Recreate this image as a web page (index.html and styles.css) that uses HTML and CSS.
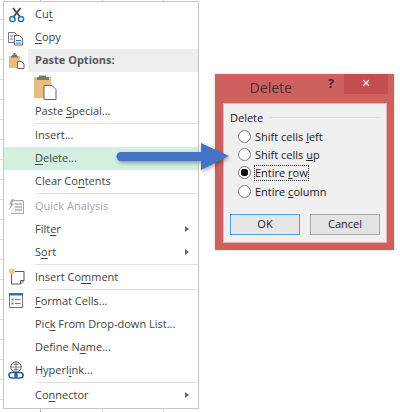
FILE: index.html
```html
<!DOCTYPE html>
<html lang="en">
<head>
<meta charset="utf-8">
<title>Delete</title>
<link rel="stylesheet" href="styles.css">
</head>
<body>
<div class="stage">
  <div class="menu">
    <div class="row"><svg class="icon" viewBox="0 0 20 20"><path d="M5 3l7.500 9.500M12.500 3L5 12.500" fill="none" stroke="#4a4a4a" stroke-width="1.900"/><circle cx="4.500" cy="14" r="2.600" fill="none" stroke="#2f75b5" stroke-width="1.500"/><circle cx="13" cy="14" r="2.600" fill="none" stroke="#2f75b5" stroke-width="1.500"/></svg><span class="label">Cu<u>t</u></span></div>
    <div class="row"><svg class="icon" viewBox="0 0 20 20"><path d="M.5 4.500h6l2 2v8h-8z" fill="#fff" stroke="#777"/><path d="M6.500 7.500h5l3 3v6.500h-8z" fill="#fff" stroke="#666"/><path d="M2 8h3M2 11h3M8 12.500h5M8 15h5" stroke="#2f75b5"/></svg><span class="label"><u>C</u>opy</span></div>
    <div class="row"><svg class="icon" viewBox="0 0 20 20"><path d="M1 5h11v12H1z" fill="#e9bd7c"/><path d="M4 5V3.500h1.500V2h2v1.500H9V5h1v1.500H3V5z" fill="#777"/><path d="M9.500 10.500h4l2.500 2.500v4.500H9.500z" fill="#fff" stroke="#666"/></svg><span class="label head">Paste Options:</span></div>
    <div class="row tall"><span class="spacer"></span><svg class="big" viewBox="0 0 24 26"><path d="M1 3h17v21H1z" fill="#e9bd7c"/><path d="M6 3V1.500h7V3h3v3H4V3z" fill="#777"/><path d="M11 11.500h8l4 4v10H11z" fill="#fff" stroke="#666"/></svg></div>
    <div class="row"><span class="spacer"></span><span class="label">Paste <u>S</u>pecial...</span></div>
    <div class="sep thin"></div>
    <div class="row"><span class="spacer"></span><span class="label">Insert...</span></div>
    <div class="row active"><span class="spacer"></span><span class="label"><u>D</u>elete...</span></div>
    <div class="row"><span class="spacer"></span><span class="label">Clear Co<u>n</u>tents</span></div>
    <div class="sep"></div>
    <div class="row off"><svg class="icon" viewBox="0 0 20 20"><path d="M5 3.500h10.500v13H3" fill="#f2f2f2" stroke="#aaa"/><path d="M4 2L1 7.500h2L1 13l5-6.500H4L6 2z" fill="#aaa"/><path d="M7 7h7M7 10h7M7 13h7" stroke="#999"/></svg><span class="label">Quick Analysis</span></div>
    <div class="row"><span class="spacer"></span><span class="label">Filt<u>e</u>r<i class="caret"></i></span></div>
    <div class="row"><span class="spacer"></span><span class="label">S<u>o</u>rt<i class="caret"></i></span></div>
    <div class="sep"></div>
    <div class="row"><svg class="icon" viewBox="0 0 20 20"><path d="M3.500 3.500h12.500v9l-3.500 3.500h-9z" fill="#fff" stroke="#555"/><path d="M12.500 16v-3.500H16" fill="none" stroke="#555"/><circle cx="4" cy="3.500" r="3" fill="#f2c77c"/></svg><span class="label">Insert Co<u>m</u>ment</span></div>
    <div class="sep thin"></div>
    <div class="row"><svg class="icon" viewBox="0 0 20 20"><path d="M1.500 1.500h13v14h-13z" fill="#fbfbfb" stroke="#777"/><path d="M1 1h14v2.500H1z" fill="#2f75b5"/><path d="M3.500 6.500h2v2h-2zM3.500 10.500h2v2h-2z" fill="#777"/><path d="M7 7.500h5.500M7 11.500h5.500" stroke="#777"/></svg><span class="label"><u>F</u>ormat Cells...</span></div>
    <div class="row"><span class="spacer"></span><span class="label">Pic<u>k</u> From Drop-down List...</span></div>
    <div class="row"><span class="spacer"></span><span class="label">Define N<u>a</u>me...</span></div>
    <div class="row"><svg class="icon" viewBox="0 0 20 20"><circle cx="8" cy="6" r="5.200" fill="none" stroke="#666"/><path d="M8 .800v10.400M2.800 6h10.400M4.500 2.500c2 1.500 5 1.500 7 0M4.500 9.500c2-1.500 5-1.500 7 0" fill="none" stroke="#666" stroke-width=".8"/><rect x="1" y="11.500" width="8" height="5.500" rx="2.700" fill="#fff" stroke="#2a5f9e" stroke-width="1.700"/><rect x="7" y="11.500" width="8" height="5.500" rx="2.700" fill="none" stroke="#2a5f9e" stroke-width="1.700"/></svg><span class="label">Hyperl<u>i</u>nk...</span></div>
    <div class="sep"></div>
    <div class="row"><span class="spacer"></span><span class="label">Co<u>n</u>nector<i class="caret"></i></span></div>
  </div>

  <div class="dialog">
    <div class="titlebar">
      <span class="title">Delete</span>
      <span class="help">?</span>
      <span class="close">✕</span>
    </div>
    <div class="body">
      <div class="group"><span>Delete</span><i class="rule"></i></div>
      <div class="options">
        <div class="option"><i class="radio"></i><span>Shift cells <u>l</u>eft</span></div>
        <div class="option"><i class="radio"></i><span>Shift cells <u>u</u>p</span></div>
        <div class="option"><i class="radio on"></i><span class="focus">Entire <u>r</u>ow</span></div>
        <div class="option"><i class="radio"></i><span>Entire <u>c</u>olumn</span></div>
      </div>
      <div class="buttons">
        <div class="btn primary">OK</div>
        <div class="btn">Cancel</div>
      </div>
    </div>
  </div>

  <svg class="arrow" viewBox="0 0 120 34"><path d="M6 10H86V1l28 13-28 14v-9H6a4.500 4.500 0 0 1 0-9z" fill="#4472c4"/></svg>
</div>
</body>
</html>
```
FILE: styles.css
```css
* { box-sizing: border-box; }
html, body { margin: 0; padding: 0; }
body {
  width: 400px;
  height: 412px;
  overflow: hidden;
  background: #fff;
  font-family: "Open Sans", "Noto Sans", sans-serif;
  color: #444;
}
.stage {
  position: relative;
  width: 400px;
  height: 412px;
  padding: 1px 0 0 3px;
  filter: blur(0.35px);
  background-image:
    linear-gradient(90deg, transparent 40px, #8fc4a0 40px, #8fc4a0 41px, transparent 41px, transparent 102px, #d6d6d6 102px, #d6d6d6 103px, transparent 103px, transparent 163px, #d6d6d6 163px, #d6d6d6 164px, transparent 164px),
    repeating-linear-gradient(180deg, transparent 0, transparent 19px, #dcdcdc 19px, #dcdcdc 20px);
  background-size: 198px 412px, 3px 412px;
  background-repeat: no-repeat;
}
.menu {
  display: flex;
  flex-direction: column;
  width: 196px;
  height: 408px;
  padding-top: 1px;
  background: #fff;
  border: 1px solid #c6c6c6;
}
.row {
  display: flex;
  align-items: center;
  flex: none;
  height: 23px;
  font-size: 11px;
}
.row.tall { height: 28px; align-items: flex-start; padding-top: 2px; }
.row.active { background: #d3f0e0; }
.row.off { color: #a8a8a8; }
.spacer { flex: none; width: 31px; }
.icon {
  flex: none;
  width: 20px;
  height: 20px;
  margin: 0 7px 0 4px;
}
.big { width: 24px; height: 26px; margin-left: -2px; }
.label {
  position: relative;
  flex: 1;
  white-space: nowrap;
  line-height: 22px;
  padding-bottom: 1px;
}
.label u { text-decoration-thickness: 1px; text-underline-offset: 2px; }
.label.head {
  margin-left: -7px;
  padding-left: 7px;
  background: #eeeeee;
  font-weight: 700;
  color: #595959;
}
.caret {
  position: absolute;
  right: 9px;
  top: 8px;
  border-left: 4px solid #666;
  border-top: 3.500px solid transparent;
  border-bottom: 3.500px solid transparent;
}
.sep {
  flex: none;
  height: 2px;
  margin-left: 31px;
  border-top: 1px solid #e2e2e2;
}
.sep.thin { height: 1px; }
.dialog {
  position: absolute;
  left: 215px;
  top: 74px;
  width: 179px;
  height: 176px;
  padding: 0 7px 7px 8px;
  display: flex;
  flex-direction: column;
  background: #cf6060;
  box-shadow: 0 0 2px rgba(0,0,0,.25);
}
.titlebar {
  flex: none;
  position: relative;
  height: 29px;
  padding-bottom: 2px;
  display: flex;
  align-items: center;
}
.title {
  width: 96px;
  text-align: center;
  font-size: 14px;
  color: #4f2c2c;
}
.help {
  position: absolute;
  left: 105px;
  top: 0;
  font-size: 13px;
  font-weight: 700;
  color: #3a2a2a;
}
.close {
  position: absolute;
  left: 121px;
  top: 0;
  width: 44px;
  height: 20px;
  background: #c44f4f;
  color: #fff;
  font-size: 11px;
  font-weight: 700;
  line-height: 20px;
  text-align: center;
  font-family: "DejaVu Sans", sans-serif;
}
.body {
  flex: 1;
  background: #f0f0f0;
  padding: 6px 6px 0;
  border: 1px solid #e6b4b4;
  font-size: 11px;
  color: #222;
  display: flex;
  flex-direction: column;
}
.group {
  display: flex;
  align-items: center;
  gap: 6px;
  height: 15px;
  font-size: 11px;
  color: #222;
}
.rule { flex: 1; height: 1px; background: #dcdcdc; }
.options {
  display: flex;
  flex-direction: column;
  margin-top: 2px;
  padding-left: 8px;
}
.option {
  display: flex;
  align-items: center;
  gap: 4px;
  height: 18.300px;
}
.radio {
  flex: none;
  width: 13px;
  height: 13px;
  border: 1px solid #7a7a7a;
  border-radius: 50%;
  background: #fff;
}
.radio.on { background: radial-gradient(circle, #111 3.500px, #fff 4px); }
.focus { outline: 1px dotted #333; line-height: 14px; }
.buttons {
  display: flex;
  gap: 10px;
  margin-top: 14px;
}
.btn {
  width: 70px;
  height: 21px;
  line-height: 17px;
  text-align: center;
  font-size: 11px;
  background: #e3e3e3;
  border: 1px solid #ababab;
  color: #222;
}
.btn.primary { border: 1px solid #4aa3e8; background: #e6e6e6; }
.arrow {
  position: absolute;
  left: 115px;
  top: 142px;
  width: 120px;
  height: 34px;
  filter: drop-shadow(1px 2px 2px rgba(0,0,0,.35));
}
```
